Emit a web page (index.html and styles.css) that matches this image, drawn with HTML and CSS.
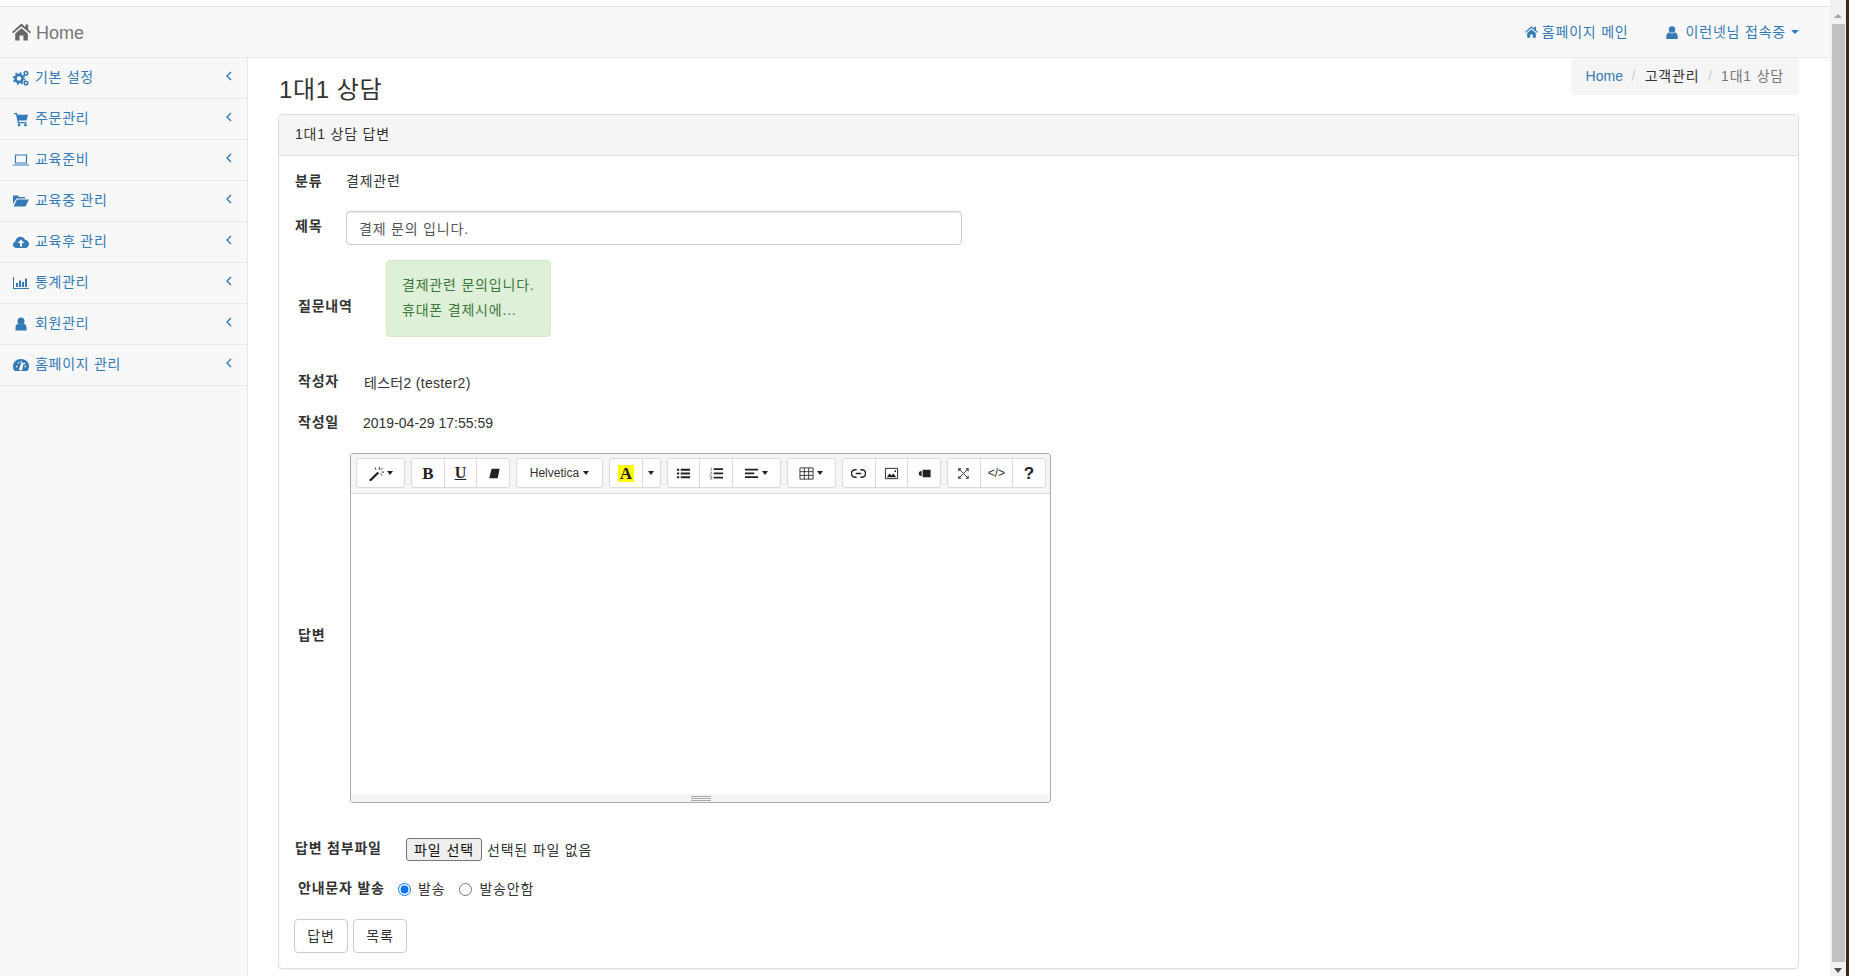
FILE: index.html
```html
<!DOCTYPE html>
<html lang="ko">
<head>
<meta charset="utf-8">
<title>1대1 상담</title>
<link rel="stylesheet" href="styles.css">
</head>
<body>
<div class="screen">
  <div class="app">
    <header class="navbar">
      <a class="brand">
        <svg class="brand-icon" viewBox="0 0 20 18"><path d="M10 0 0 8.900l1.200 1.400L10 2.900l8.800 7.400L20 8.900l-3-2.600V1h-2.800v2.900z"/><path d="M3.400 10.600 10 5l6.600 5.600V18H12v-5.200H8V18H3.400z"/></svg>
        <span>Home</span>
      </a>
      <nav class="nav-right">
        <a class="nav-link main-link">
          <svg class="i13" viewBox="0 0 20 18"><path d="M10 0 0 8.900l1.200 1.400L10 2.900l8.800 7.400L20 8.900l-3-2.600V1h-2.800v2.900z"/><path d="M3.400 10.600 10 5l6.600 5.600V18H12v-5.200H8V18H3.400z"/></svg>
          <span>홈페이지 메인</span>
        </a>
        <a class="nav-link user-link">
          <svg class="i12" viewBox="0 0 14 16"><circle cx="7" cy="4.200" r="4"/><path d="M0 16v-3.500C0 9.600 2 8 3.600 7.600 4.500 8.600 5.700 9.200 7 9.200s2.500-.6 3.400-1.600C12 8 14 9.600 14 12.500V16z"/></svg>
          <span>이런넷님 접속중</span>
          <i class="caret"></i>
        </a>
      </nav>
    </header>
    <div class="layout">
      <aside class="sidebar">
        <a class="menu-item"><svg class="mi" viewBox="0 0 16 16"><circle cx="6" cy="8.500" r="3.500" fill="none" stroke="#337ab7" stroke-width="2.600"/><circle cx="6" cy="8.500" r="5.400" fill="none" stroke="#337ab7" stroke-width="1.800" stroke-dasharray="2 2.240"/><circle cx="13" cy="3.200" r="1.800" fill="none" stroke="#337ab7" stroke-width="1.500"/><circle cx="13" cy="13" r="1.800" fill="none" stroke="#337ab7" stroke-width="1.500"/></svg><span>기본 설정</span><svg class="chev" viewBox="0 0 6 10"><path d="M5 1 1 5l4 4" fill="none" stroke="#337ab7" stroke-width="1.400"/></svg></a>
        <a class="menu-item"><svg class="mi" viewBox="0 0 16 16"><path d="M1 2h3l.5 1.800H15l-1.400 5.700H5.800l.3 1.500h7.400v1.300H4.900L3 3.300H1z"/><circle cx="6" cy="14" r="1.400"/><circle cx="12.500" cy="14" r="1.400"/></svg><span>주문관리</span><svg class="chev" viewBox="0 0 6 10"><path d="M5 1 1 5l4 4" fill="none" stroke="#337ab7" stroke-width="1.400"/></svg></a>
        <a class="menu-item"><svg class="mi" viewBox="0 0 16 16"><path d="M2.500 3h11v8h-11z" fill="none" stroke="#337ab7" stroke-width="1.200"/><path d="M0 12.500h16v1H0z"/></svg><span>교육준비</span><svg class="chev" viewBox="0 0 6 10"><path d="M5 1 1 5l4 4" fill="none" stroke="#337ab7" stroke-width="1.400"/></svg></a>
        <a class="menu-item"><svg class="mi" viewBox="0 0 16 16"><path d="M0 2.500h5l1 1.500h6v1.500H3.500L0 11z"/><path d="M4 6.500h12L12.500 13.500H.5z"/></svg><span>교육중 관리</span><svg class="chev" viewBox="0 0 6 10"><path d="M5 1 1 5l4 4" fill="none" stroke="#337ab7" stroke-width="1.400"/></svg></a>
        <a class="menu-item"><svg class="mi" viewBox="0 0 16 16"><path d="M3.500 14C1.500 14 0 12.500 0 10.700c0-1.500 1-2.800 2.400-3.200C2.600 5 4.700 2.800 7.500 2.800c2.200 0 4 1.300 4.800 3.200 2.100.1 3.700 1.900 3.700 4 0 2.200-1.800 4-4 4z"/><path d="M8 5.500 4.500 9H7v3.500h2V9h2.500z" fill="#f8f8f8"/></svg><span>교육후 관리</span><svg class="chev" viewBox="0 0 6 10"><path d="M5 1 1 5l4 4" fill="none" stroke="#337ab7" stroke-width="1.400"/></svg></a>
        <a class="menu-item"><svg class="mi" viewBox="0 0 16 16"><path d="M0 2h1v11h15v1H0z"/><path d="M3 8h2v4H3zM6 5.500h2V12H6zM9 7h2v5H9zM12 3.500h2V12h-2z"/></svg><span>통계관리</span><svg class="chev" viewBox="0 0 6 10"><path d="M5 1 1 5l4 4" fill="none" stroke="#337ab7" stroke-width="1.400"/></svg></a>
        <a class="menu-item"><svg class="mi" viewBox="0 0 16 16"><circle cx="8" cy="5" r="3.500"/><path d="M2.500 14.500v-3c0-2.300 1.500-3.600 3-4 .7.700 1.500 1 2.500 1s1.800-.3 2.500-1c1.500.4 3 1.700 3 4v3z"/></svg><span>회원관리</span><svg class="chev" viewBox="0 0 6 10"><path d="M5 1 1 5l4 4" fill="none" stroke="#337ab7" stroke-width="1.400"/></svg></a>
        <a class="menu-item"><svg class="mi" viewBox="0 0 16 16"><path d="M1.700 14C.6 12.700 0 11.100 0 9.400 0 5.200 3.600 2 8 2s8 3.200 8 7.400c0 1.700-.6 3.300-1.700 4.600z"/><path d="M6.600 12.500 9 6l1 .4-1.500 6.400zM3 9.500h1.500M5 5.500l1 1M8 4v1.500M12 6l-1 1M11.500 9.500H13" stroke="#f8f8f8" stroke-width="1.300" fill="#f8f8f8"/></svg><span>홈페이지 관리</span><svg class="chev" viewBox="0 0 6 10"><path d="M5 1 1 5l4 4" fill="none" stroke="#337ab7" stroke-width="1.400"/></svg></a>
      </aside>
      <main class="content">
        <div class="page-head">
          <h1>1대1 상담</h1>
          <ol class="breadcrumb">
            <li class="crumb-link">Home</li>
            <li class="sep">/</li>
            <li>고객관리</li>
            <li class="sep">/</li>
            <li class="crumb-active">1대1 상담</li>
          </ol>
        </div>
        <section class="panel">
          <div class="panel-heading">1대1 상담 답변</div>
          <form class="panel-body">
            <div class="row row-cat">
              <label class="lbl lbl-cat">분류</label>
              <span>결제관련</span>
            </div>
            <div class="row row-title">
              <label class="lbl lbl-cat lbl-title">제목</label>
              <input class="title-input" type="text" value="결제 문의 입니다.">
            </div>
            <div class="row row-question">
              <label class="lbl lbl-q">질문내역</label>
              <div class="alert">결제관련 문의입니다.<br>휴대폰 결제시에...</div>
            </div>
            <div class="row row-writer">
              <label class="lbl lbl-w">작성자</label>
              <span class="val-writer">테스터2 (tester2)</span>
            </div>
            <div class="row row-date">
              <label class="lbl lbl-w">작성일</label>
              <span class="val-date">2019-04-29 17:55:59</span>
            </div>
            <div class="row row-editor">
              <label class="lbl lbl-ans">답변</label>
              <div class="editor">
                <div class="toolbar">
                  <div class="grp"><button type="button" class="tb w48"><svg class="ti" viewBox="0 0 16 16"><path d="M0 15 9 6l1.800 1.800L1.800 16.500z" fill="#222"/><path d="M11 1v3M13.500 6.500H16M6.500 1.500l1 2.500M14.500 2l-2 2M14 10l-2-2" stroke="#222" stroke-width="1" fill="none"/></svg><i class="mini-caret"></i></button></div>
                  <div class="grp"><button type="button" class="tb w33 serif-b">B</button><button type="button" class="tb w33 serif-u">U</button><button type="button" class="tb w33"><svg class="ti" viewBox="0 0 16 16"><path d="M6 3h8.500L12.500 13H3.500z" fill="#222"/></svg></button></div>
                  <div class="grp"><button type="button" class="tb w87 font-btn">Helvetica<i class="mini-caret"></i></button></div>
                  <div class="grp"><button type="button" class="tb w33 serif-b"><span class="hl">A</span></button><button type="button" class="tb w19"><i class="mini-caret solo"></i></button></div>
                  <div class="grp"><button type="button" class="tb w33"><svg class="ti" viewBox="0 0 16 16"><path d="M1 3h2.400v2H1zM5 3h10v2H5zM1 7h2.400v2H1zM5 7h10v2H5zM1 11h2.400v2H1zM5 11h10v2H5z" fill="#222"/></svg></button><button type="button" class="tb w33"><svg class="ti" viewBox="0 0 16 16"><path d="M5 2.500h10v1.800H5zM5 7h10v1.800H5zM5 11.500h10v1.800H5z" fill="#222"/><path d="M1.500 2h1v3M1 6.500h2L1 9.500h2M1 11h2v3H1M1.500 12.500h1.500" stroke="#555" stroke-width=".6" fill="none"/></svg></button><button type="button" class="tb w49"><svg class="ti" viewBox="0 0 16 16"><path d="M1 3h14v1.800H1zM1 7h10v1.800H1zM1 11h14v1.800H1z" fill="#222"/></svg><i class="mini-caret"></i></button></div>
                  <div class="grp"><button type="button" class="tb w49"><svg class="ti" viewBox="0 0 16 16"><path d="M1 2h14v12H1zM1 6h14M1 10h14M5.700 2v12M10.300 2v12" stroke="#222" stroke-width=".9" fill="none"/></svg><i class="mini-caret"></i></button></div>
                  <div class="grp"><button type="button" class="tb w33"><svg class="ti" viewBox="0 0 16 16"><path d="M6 4H4.500a4 4 0 0 0 0 8H6M10 4h1.500a4 4 0 0 1 0 8H10M5 8h6" stroke="#222" stroke-width="1.500" fill="none"/></svg></button><button type="button" class="tb w33"><svg class="ti" viewBox="0 0 16 16"><path d="M1.500 2.500h13v11h-13z" stroke="#222" stroke-width="1" fill="none"/><path d="M3 12l3-4 2 2 2-2 3 4z" fill="#222"/><circle cx="12" cy="5.500" r="1" fill="#222"/></svg></button><button type="button" class="tb w33"><svg class="ti" viewBox="0 0 16 16"><path d="M6 4h8.500v8H6zM2 6.500 5 5v6L2 9.500z" fill="#222"/></svg></button></div>
                  <div class="grp"><button type="button" class="tb w33"><svg class="ti" viewBox="0 0 16 16"><path d="M3 3l10 10M13 3 3 13" stroke="#333" stroke-width="1"/><path d="M2.500 2.500h3.500L2.500 6zM13.500 2.500H10l3.500 3.500zM2.500 13.500H6l-3.500-3.500zM13.500 13.500H10l3.500-3.500z" fill="#333"/></svg></button><button type="button" class="tb w33 code-btn">&lt;/&gt;</button><button type="button" class="tb w33 help-btn">?</button></div>
                </div>
                <div class="edit-area"></div>
                <div class="statusbar"><div class="grip"></div></div>
              </div>
            </div>
            <div class="row row-file">
              <label class="lbl lbl-file">답변 첨부파일</label>
              <button type="button" class="file-btn">파일 선택</button>
              <span class="file-name">선택된 파일 없음</span>
            </div>
            <div class="row row-sms">
              <label class="lbl lbl-sms">안내문자 발송</label>
              <label class="radio r1"><input type="radio" name="sms" checked>발송</label>
              <label class="radio"><input type="radio" name="sms">발송안함</label>
            </div>
            <div class="row row-actions">
              <button type="button" class="btn">답변</button>
              <button type="button" class="btn">목록</button>
            </div>
          </form>
        </section>
      </main>
    </div>
  </div>
  <div class="scrollbar">
    <i class="arrow up"></i>
    <div class="thumb"></div>
    <i class="arrow down"></i>
  </div>
  <div class="edge"></div>
</div>
</body>
</html>
```
FILE: styles.css
```css
* { box-sizing: border-box; }
html, body { margin: 0; height: 976px; overflow: hidden; background: #fff; }
body {
  font-family: "Liberation Sans", "Noto Sans CJK KR", sans-serif;
  font-size: 14px;
  color: #333;
  line-height: 20px;
  letter-spacing: .8px;
}
.screen { display: flex; height: 976px; }
.app { flex: 1; min-width: 0; padding-top: 6px; display: flex; flex-direction: column; }
.scrollbar { width: 16px; background: #f1f1f1; display: flex; flex-direction: column; align-items: center; justify-content: space-between; padding: 14px 0 3px; }
.thumb { width: 13px; height: 938px; background: #c1c1c1; }
.arrow { width: 0; height: 0; border-left: 4px solid transparent; border-right: 4px solid transparent; }
.arrow.up { border-bottom: 4px solid #a3a3a3; }
.arrow.down { border-top: 5px solid #505050; }
.edge { width: 3px; background: #35291f; }

.navbar { height: 52px; flex: none; background: #f8f8f8; border-top: 1px solid #e2e2e6; border-bottom: 1px solid #e7e7e7; display: flex; align-items: center; justify-content: space-between; padding: 0 31px 0 12px; }
.brand { display: flex; align-items: center; gap: 5px; color: #777; font-size: 18px; letter-spacing: 0; padding-top: 2px; }
.brand-icon { width: 19px; height: 18px; fill: #666; margin-top: -3px; }
.nav-right { display: flex; align-items: center; }
.nav-link { display: flex; align-items: center; color: #337ab7; }
.main-link { gap: 4px; margin-right: 37px; }
.user-link { gap: 8px; }
.i13 { width: 13px; height: 12px; fill: #337ab7; }
.i12 { width: 12px; height: 13px; fill: #337ab7; }
.caret { width: 0; height: 0; margin-left: -3px; border-left: 4px solid transparent; border-right: 4px solid transparent; border-top: 4px solid #337ab7; }

.layout { flex: 1; display: flex; min-height: 0; }
.sidebar { width: 248px; flex: none; background: #f8f8f8; border-right: 1px solid #e7e7e7; }
.menu-item { height: 41px; border-bottom: 1px solid #e7e7e7; display: flex; align-items: center; padding: 0 15px 0 13px; color: #337ab7; }
.menu-item span { margin-left: 6px; flex: 1; margin-top: -2px; letter-spacing: .7px; }
.mi { width: 16px; height: 16px; fill: #337ab7; flex: none; }
.chev { width: 6px; height: 10px; margin-top: -5px; }

.content { flex: 1; min-width: 0; padding: 0 31px 0 30px; }
.page-head { height: 56px; display: flex; justify-content: space-between; align-items: flex-start; }
h1 { margin: 18px 0 0 1px; font-size: 24px; line-height: 28px; font-weight: 400; color: #333; letter-spacing: .6px; }
.breadcrumb { margin: 0; padding: 8px 15px; height: 37px; list-style: none; display: flex; background: #f5f5f5; border-radius: 4px; }
.sep { color: #ccc; padding: 0 8.500px; }
.crumb-link { color: #337ab7; letter-spacing: 0; }
.crumb-active { color: #777; }

.panel { border: 1px solid #ddd; border-radius: 4px; height: 855px; box-shadow: 0 1px 1px rgba(0,0,0,.05); }
.panel-heading { height: 41px; padding: 9px 16px; background: #f5f5f5; border-bottom: 1px solid #ddd; border-radius: 3px 3px 0 0; }
.panel-body { padding: 15px 16px; }
.row { display: flex; align-items: center; }
.lbl { font-weight: 700; }
.lbl-cat { width: 51px; flex: none; }
.lbl-title { align-self: flex-start; margin-top: 5px; }
.row-title { margin-top: 20px; }
.title-input { width: 616px; height: 34px; padding: 6px 12px; border: 1px solid #ccc; border-radius: 4px; font: inherit; letter-spacing: .8px; color: #555; box-shadow: inset 0 1px 1px rgba(0,0,0,.075); }
.row-question { margin-top: 15px; }
.lbl-q { margin-left: 3px; width: 88px; flex: none; margin-top: 15px; }
.alert { width: 165px; height: 77px; padding: 12px 15px; line-height: 25px; background: #dff0d8; border: 1px solid #d6e9c6; border-radius: 4px; color: #3c763d; }
.row-writer { margin-top: 35px; }
.lbl-w { margin-left: 3px; width: 66px; flex: none; margin-top: -3px; }
.val-writer { margin-top: 1px; letter-spacing: .3px; }
.val-date { margin-left: -1px; margin-top: 0; letter-spacing: 0; }
.row-date { margin-top: 20px; }
.row-editor { margin-top: 20px; }
.lbl-ans { margin-left: 3px; width: 52px; flex: none; margin-top: 14px; }
.editor { width: 701px; height: 350px; border: 1px solid #a9a9a9; border-radius: 3px; display: flex; flex-direction: column; overflow: hidden; }
.toolbar { height: 40px; flex: none; background: #f5f5f5; border-bottom: 1px solid #ddd; display: flex; gap: 6px; padding: 4px 0 0 5px; }
.grp { display: flex; height: 30px; }
.tb { height: 30px; padding: 0; margin-left: -1px; background: #fff; border: 1px solid #dbdbdb; font: 12px/1 "Liberation Sans", sans-serif; letter-spacing: 0; color: #333; display: flex; align-items: center; justify-content: center; gap: 3px; }
.tb:first-child { margin-left: 0; border-radius: 3px 0 0 3px; }
.tb:last-child { border-radius: 0 3px 3px 0; }
.tb:only-child { border-radius: 3px; }
.w19 { width: 19px; }
.w33 { width: 33.670px; }
.w48 { width: 49px; }
.w49 { width: 49px; }
.w87 { width: 87px; }
.ti { width: 15px; height: 15px; flex: none; }
.mini-caret { width: 0; height: 0; border-left: 3px solid transparent; border-right: 3px solid transparent; border-top: 4px solid #222; }
.font-btn { gap: 4px; }
.serif-b { font: 700 17px/1 "Liberation Serif", serif; color: #222; }
.serif-u { font: 700 16px/1 "Liberation Serif", serif; color: #222; text-decoration: underline; }
.hl { background: #ff0; padding: 0 2px; }
.code-btn { font-size: 12px; }
.help-btn { font-size: 17px; font-weight: 700; color: #222; }
.edit-area { flex: 1; background: #fff; }
.statusbar { height: 8px; flex: none; background: #f5f5f5; display: flex; justify-content: center; padding-top: 2px; }
.grip { width: 20px; height: 5px; border-top: 1px solid #a9a9a9; border-bottom: 1px solid #a9a9a9; background: linear-gradient(#a9a9a9, #a9a9a9) center / 100% 1px no-repeat; }

.row-file { margin-top: 35px; height: 23px; }
.lbl-file { width: 111px; flex: none; margin-top: -3px; }
.file-btn { width: 76px; height: 23px; padding: 0; font: 14px/1 "Liberation Sans", "Noto Sans CJK KR", sans-serif; letter-spacing: .9px; color: #111; background: #efefef; border: 1px solid #767676; border-radius: 3px; }
.file-name { margin-left: 5px; }
.row-sms { margin-top: 18px; }
.lbl-sms { margin-left: 3px; width: 100px; flex: none; margin-top: -3px; }
.radio { display: flex; align-items: center; }
.radio input { margin: 0 7px 0 0; width: 13px; height: 13px; }
.r1 { margin-right: 14px; }
.row-actions { margin-top: 20px; gap: 5px; margin-left: -1px; }
.btn { width: 54px; height: 34px; padding: 0; background: #fff; border: 1px solid #ccc; border-radius: 4px; font: inherit; letter-spacing: .9px; color: #333; }
```
